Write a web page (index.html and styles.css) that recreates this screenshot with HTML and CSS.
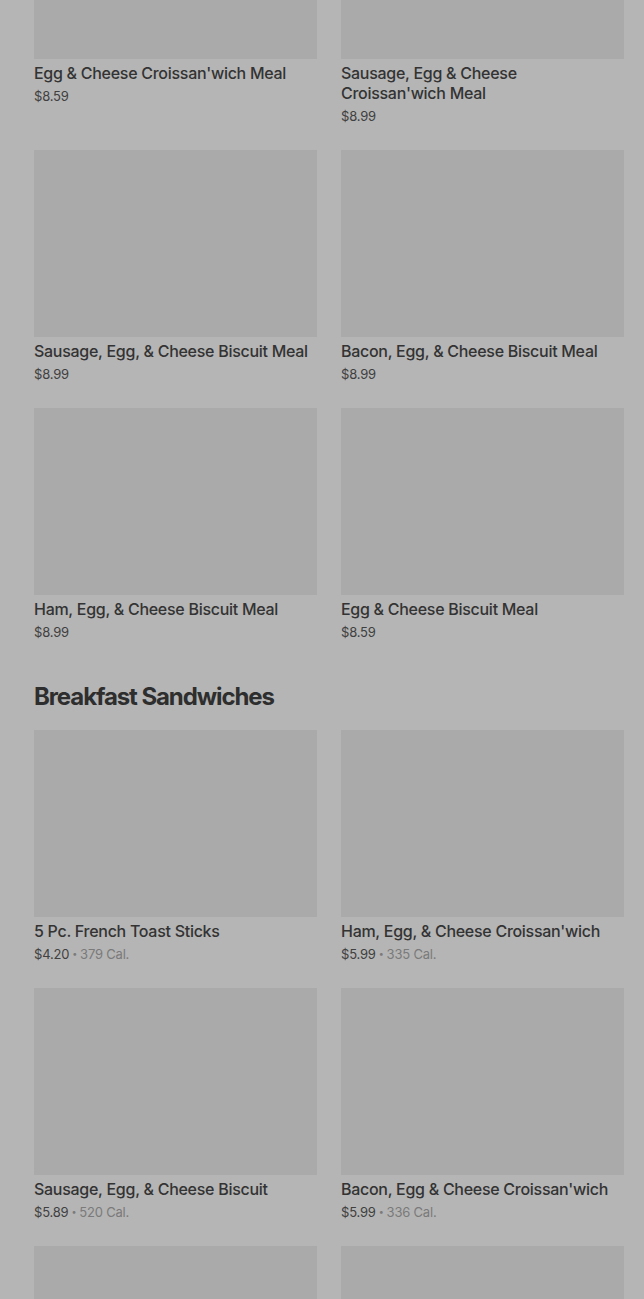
FILE: index.html
```html
<!DOCTYPE html>
<html>
<head>
<meta charset="utf-8">
<link rel="stylesheet" href="styles.css">
</head>
<body>
<div class="page">
  <section class="grid first">
    <div class="card"><div class="img"></div><div class="title">Egg &amp; Cheese Croissan'wich Meal</div><div class="meta"><span class="price">$8.59</span></div></div>
    <div class="card"><div class="img"></div><div class="title">Sausage, Egg &amp; Cheese Croissan'wich Meal</div><div class="meta"><span class="price">$8.99</span></div></div>
    <div class="card"><div class="img"></div><div class="title">Sausage, Egg, &amp; Cheese Biscuit Meal</div><div class="meta"><span class="price">$8.99</span></div></div>
    <div class="card"><div class="img"></div><div class="title">Bacon, Egg, &amp; Cheese Biscuit Meal</div><div class="meta"><span class="price">$8.99</span></div></div>
    <div class="card"><div class="img"></div><div class="title">Ham, Egg, &amp; Cheese Biscuit Meal</div><div class="meta"><span class="price">$8.99</span></div></div>
    <div class="card"><div class="img"></div><div class="title">Egg &amp; Cheese Biscuit Meal</div><div class="meta"><span class="price">$8.59</span></div></div>
  </section>
  <h2 class="heading">Breakfast Sandwiches</h2>
  <section class="grid">
    <div class="card"><div class="img"></div><div class="title">5 Pc. French Toast Sticks</div><div class="meta"><span class="price">$4.20</span><span class="dot">•</span><span class="cal">379 Cal.</span></div></div>
    <div class="card"><div class="img"></div><div class="title">Ham, Egg, &amp; Cheese Croissan'wich</div><div class="meta"><span class="price">$5.99</span><span class="dot">•</span><span class="cal">335 Cal.</span></div></div>
    <div class="card"><div class="img"></div><div class="title">Sausage, Egg, &amp; Cheese Biscuit</div><div class="meta"><span class="price">$5.89</span><span class="dot">•</span><span class="cal">520 Cal.</span></div></div>
    <div class="card"><div class="img"></div><div class="title">Bacon, Egg &amp; Cheese Croissan'wich</div><div class="meta"><span class="price">$5.99</span><span class="dot">•</span><span class="cal">336 Cal.</span></div></div>
    <div class="card"><div class="img"></div><div class="title">Sausage, Egg &amp; Cheese Croissan'wich</div><div class="meta"><span class="price">$5.99</span></div></div>
    <div class="card"><div class="img"></div><div class="title">Bacon, Egg &amp; Cheese Biscuit</div><div class="meta"><span class="price">$5.89</span></div></div>
  </section>
</div>
</body>
</html>
```
FILE: styles.css
```css
html, body {
  margin: 0;
  padding: 0;
  background: #b5b5b5;
  overflow: hidden;
}
body {
  font-family: Inter, "Liberation Sans", sans-serif;
  color: #333333;
}
.page {
  padding: 0 20px 0 34px;
  margin-top: -128px;
}
.grid {
  display: grid;
  grid-template-columns: 283px 283px;
  column-gap: 24px;
  row-gap: 24px;
}
.card {
  display: flex;
  flex-direction: column;
}
.img {
  height: 187px;
  background: #aaaaaa;
}
.title {
  margin-top: 4px;
  font-size: 16px;
  line-height: 20px;
  font-weight: 500;
  letter-spacing: -0.28px;
  color: #333333;
}
.meta {
  margin-top: 3px;
  font-size: 13px;
  line-height: 20px;
  letter-spacing: -0.2px;
  color: #404040;
  display: flex;
  align-items: center;
}
.dot {
  color: #7a7a7a;
  font-size: 9px;
  margin: 0 3px;
}
.cal {
  color: #7a7a7a;
}
.heading {
  margin: 44px 0 22px;
  font-size: 24px;
  line-height: 22px;
  font-weight: 700;
  color: #2e2e2e;
  letter-spacing: -1.1px;
}
```
